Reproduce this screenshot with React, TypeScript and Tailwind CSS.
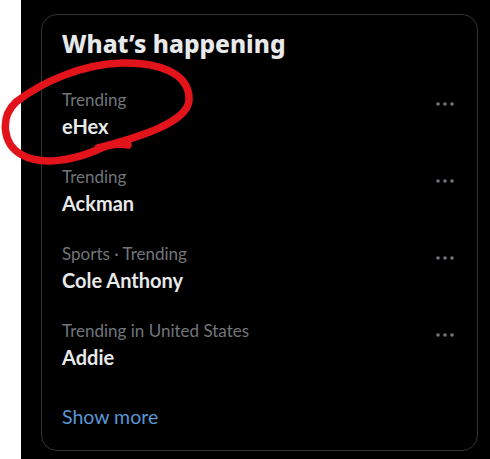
const trends = [
  { category: "Trending", name: "eHex" },
  { category: "Trending", name: "Ackman" },
  { category: "Sports · Trending", name: "Cole Anthony" },
  { category: "Trending in United States", name: "Addie" },
];

const Dots = () => (
  <svg width="20" height="6" viewBox="0 0 20 6" className="mt-[12px]">
    <circle cx="3" cy="3" r="1.8" fill="#71767b" />
    <circle cx="10" cy="3" r="1.8" fill="#71767b" />
    <circle cx="17" cy="3" r="1.8" fill="#71767b" />
  </svg>
);

const App = () => {
  return (
    <div
      className="relative flex w-[490px] h-[459px] overflow-hidden"
      style={{ fontFamily: 'Lato, "Noto Sans", sans-serif' }}
    >
      <div className="w-[21px] bg-white" />
      <div className="flex-1 bg-black pl-[20px] pt-[14px]">
        <div className="w-[437px] h-[437px] rounded-[16px] border border-[#2f3336] flex flex-col">
          <h2
            className="px-[20px] pt-[14px] pb-[16px] text-[24.5px] leading-[30px] font-extrabold text-[#e7e9ea]"
            style={{ fontFamily: '"Noto Sans", sans-serif' }}
          >
            What’s happening
          </h2>
          {trends.map((t) => (
            <div key={t.name} className="flex justify-between pl-[20px] pr-[22px] pt-[14px] pb-[13px] h-[77px]">
              <div className="flex flex-col gap-[2px]">
                <span className="text-[17px] leading-[22px] text-[#71767b]">{t.category}</span>
                <span className="text-[20px] leading-[26px] font-bold text-[#e7e9ea]">{t.name}</span>
              </div>
              <Dots />
            </div>
          ))}
          <div className="px-[20px] pt-[21px] text-[19.5px] leading-[26px] text-[#5a96d6]">Show more</div>
        </div>
      </div>
      <svg
        className="absolute top-0 left-0 pointer-events-none"
        width="490"
        height="459"
        viewBox="0 0 490 459"
      >
        <path
          d="M 98 148 C 140 137, 188 122, 189 100 C 190 72, 156 62, 122 63 C 82 64, 42 82, 16 102 C 0 117, 2 144, 22 155 C 42 166, 74 160, 97 150 C 107 145, 117 143, 128 145"
          fill="none"
          stroke="#e3131b"
          strokeWidth="7.5"
          strokeLinecap="round"
          strokeLinejoin="round"
        />
      </svg>
    </div>
  );
};

export default App;
